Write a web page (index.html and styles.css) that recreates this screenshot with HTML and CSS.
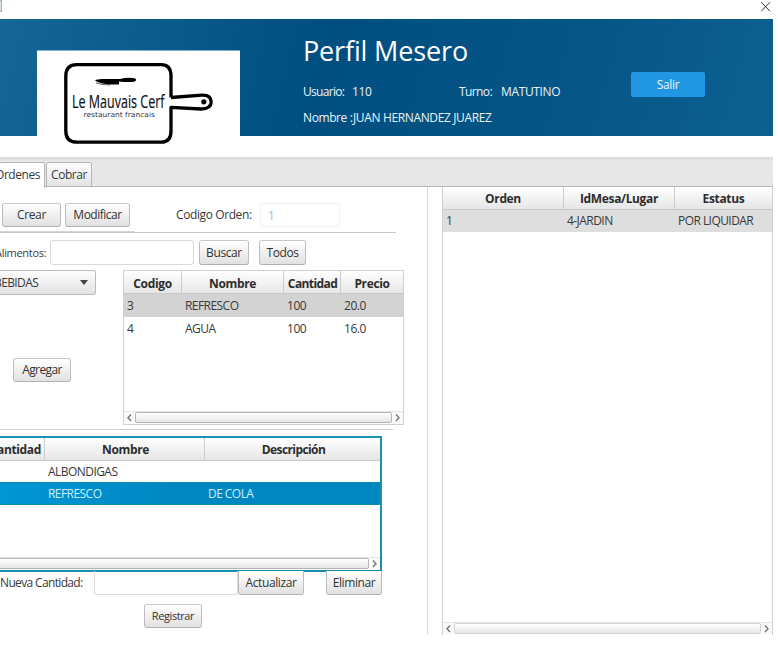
FILE: index.html
```html
<!DOCTYPE html>
<html lang="es">
<head>
<meta charset="utf-8">
<title>Perfil Mesero</title>
<link rel="stylesheet" href="styles.css">
</head>
<body>
<div class="window">
  <div class="titlebar">
    <span class="edge"></span>
    <svg class="close" width="12" height="12" viewBox="0 0 12 12"><path d="M1.2 1.2L10 10.2M10 1.2L1.2 10.2"/></svg>
  </div>
  <header class="header">
    <svg class="logo" width="203" height="106" viewBox="37 50 203 106">
      <rect x="37" y="50.5" width="203" height="106" fill="#fff"/>
      <path class="board" d="M171 97.5V76Q171 64.7 161 64.7H77Q65.8 64.7 65.8 76V131Q65.8 142.2 77 142.2H161Q171 142.2 171 131V107.3L201 109Q211 109 211.2 102Q211 95 202 95.2L171 97.5"/>
      <circle cx="203.8" cy="101.8" r="2.6"/>
      <path d="M95 80.5Q97 79 102 79H120Q128 77 135.500 78.500Q137 80 135 81.500Q128 82.500 119 81.500V84.500H110Q100 84 95 80.500Z"/>
      <path class="glint" d="M96 82.800Q101 85 110 85"/>
      <text class="brand" x="72" y="107.500" textLength="92.500" lengthAdjust="spacingAndGlyphs">Le Mauvais Cerf</text>
      <text class="tagline" x="83.500" y="117" textLength="71.500" lengthAdjust="spacingAndGlyphs">restaurant francais</text>
    </svg>
    <div class="profile">
      <h1>Perfil Mesero</h1>
      <div class="line user"><span class="key">Usuario:</span><span class="id">110</span><span class="shift">Turno:</span><span>MATUTINO</span></div>
      <div class="line name"><span class="key">Nombre :</span><span>JUAN HERNANDEZ JUAREZ</span></div>
    </div>
    <button class="exit">Salir</button>
  </header>
  <nav class="tabs"><div class="tab active"><span>Ordenes</span></div><div class="tab"><span>Cobrar</span></div></nav>
  <main class="content">
    <section class="left">
      <div class="row actions">
        <button class="btn crear">Crear</button><button class="btn modificar">Modificar</button>
        <label class="order-label">Codigo Orden:</label><div class="field disabled">1</div>
      </div>
      <div class="rule top"></div>
      <div class="row search">
        <label class="food-label">Alimentos:</label><div class="field food"></div>
        <button class="btn buscar">Buscar</button><button class="btn todos">Todos</button>
      </div>
      <div class="menu">
        <div class="picker">
          <div class="combo"><span>BEBIDAS</span><i></i></div>
          <button class="btn agregar">Agregar</button>
        </div>
        <div class="table products">
          <div class="tr th"><b>Codigo</b><b>Nombre</b><b>Cantidad</b><b>Precio</b></div>
          <div class="tr sel"><span>3</span><span class="caps">REFRESCO</span><span>100</span><span>20.0</span></div>
          <div class="tr"><span>4</span><span class="caps">AGUA</span><span>100</span><span>16.0</span></div>
          <div class="scroll"><svg width="11" height="13" viewBox="0 0 11 13"><path d="M7 3.500L4 6.700L7 10"/></svg><div class="thumb"></div><svg width="11" height="13" viewBox="0 0 11 13"><path d="M4 3.500L7 6.700L4 10"/></svg></div>
        </div>
      </div>
      <div class="rule bottom"></div>
      <div class="table detail">
        <div class="tr th"><b>Cantidad</b><b>Nombre</b><b>Descripción</b></div>
        <div class="tr"><span></span><span class="caps">ALBONDIGAS</span><span></span></div>
        <div class="tr chosen"><span></span><span class="caps">REFRESCO</span><span class="caps">DE COLA</span></div>
        <div class="scroll"><div class="thumb"></div><svg width="11" height="13" viewBox="0 0 11 13"><path d="M4 3.500L7 6.700L4 10"/></svg></div>
      </div>
      <div class="row update">
        <label class="qty-label">Nueva Cantidad:</label><div class="field qty"></div>
        <button class="btn actualizar">Actualizar</button><button class="btn eliminar">Eliminar</button>
      </div>
      <button class="btn registrar">Registrar</button>
    </section>
    <section class="table orders">
      <div class="tr th"><b>Orden</b><b>IdMesa/Lugar</b><b>Estatus</b></div>
      <div class="tr sel"><span>1</span><span class="caps">4-JARDIN</span><span class="caps">POR LIQUIDAR</span></div>
      <div class="scroll"><svg width="11" height="13" viewBox="0 0 11 13"><path d="M7 3.500L4 6.700L7 10"/></svg><div class="thumb"></div><svg width="11" height="13" viewBox="0 0 11 13"><path d="M4 3.500L7 6.700L4 10"/></svg></div>
    </section>
  </main>
</div>
</body>
</html>
```
FILE: styles.css
```css
* { box-sizing: border-box; }
body { margin: 0; background: #fff; overflow: hidden; }
.window { width: 773px; height: 648px; font: 12px/16px "Open Sans", "Noto Sans", sans-serif; letter-spacing: -0.3px; color: #393939; white-space: nowrap; overflow: hidden; }
.titlebar { height: 19px; display: flex; justify-content: space-between; }
.edge { width: 2px; height: 12px; border: 1px solid #a9b5b6; border-left: 0; background: #d5e2e2; }
.close { margin: 1px 1px 0 0; fill: none; stroke: #333; stroke-width: 1; }

.header { height: 138px; display: flex; align-items: flex-start; background: linear-gradient(105deg, #156796 0%, #075687 28%, #004f80 42%, #045485 68%, #0e6092 100%) 0 0 / 773px 117px no-repeat; color: #e8f4fa; }
.logo { margin: 31px 0 0 37px; flex: none; }
.board { fill: none; stroke: #000; stroke-width: 3.300; stroke-linejoin: round; }
.glint { fill: none; stroke: #000; stroke-width: 0.600; }
.brand { font: 19px "Open Sans", sans-serif; letter-spacing: 0; fill: #111; stroke: #111; stroke-width: 0.200; }
.tagline { font: 7px "DejaVu Sans", sans-serif; letter-spacing: 0; fill: #333; }
.profile { width: 328px; margin-left: 63px; padding-top: 12px; }
h1 { margin: 0; font-size: 27px; line-height: 40px; font-weight: 400; letter-spacing: -0.150px; color: #fff; }
.line { display: flex; }
.user { margin-top: 13px; }
.name { margin-top: 10px; }
.key { width: 49px; }
.user .key { letter-spacing: -0.700px; }
.name .key { width: 50px; letter-spacing: -0.400px; }
.name span:last-child { letter-spacing: -0.360px; }
.id { width: 107px; letter-spacing: -0.400px; }
.shift { width: 42px; letter-spacing: -0.600px; }
.user span:last-child { letter-spacing: -0.350px; }
.exit { width: 74px; height: 25px; margin-top: 53px; padding: 0; border: 0; border-radius: 2px; background: #2196e3; color: #e9f6ff; font: inherit; letter-spacing: inherit; }

.tabs { height: 30px; display: flex; align-items: flex-start; gap: 1px; padding-top: 5px; background: linear-gradient(#d9d9d9 0, #e8e8e8 4px, #e6e6e6 100%); border-bottom: 1px solid #b8b8b8; }
.tab { width: 46px; height: 25px; border: 1px solid #b5b5b5; border-radius: 2px 2px 0 0; line-height: 24px; background: linear-gradient(#fdfdfd, #e4e4e4); text-align: center; letter-spacing: -0.450px; }
.tab.active { width: 45px; height: 26px; border-width: 1px 1px 0 0; background: #fff; display: flex; justify-content: flex-end; padding-right: 4px; }

.content { height: 448px; display: flex; gap: 14px; }
.left { width: 428px; border-right: 1px solid #d9d9d9; overflow: hidden; }
.row { display: flex; align-items: center; }
.btn { flex: none; padding: 0; height: 24px; font: inherit; letter-spacing: -0.400px; color: #333; border: 1px solid; border-color: #c8c8c8 #bdbdbd #b2b2b2 #bdbdbd; border-radius: 3px; background: linear-gradient(#fff, #e1e1e1); }
.field { flex: none; height: 25px; border: 1px solid #dadada; border-radius: 3px; }
.actions { padding: 16px 0 0 2px; }
.crear { width: 59px; }
.modificar { width: 65px; margin-left: 4px; letter-spacing: -0.500px; }
.order-label { width: 84px; margin-left: 46px; letter-spacing: -0.400px; }
.disabled { width: 80px; height: 24px; padding-left: 7px; line-height: 23px; color: #b5b5b5; border-color: #f0f0f0; }
.rule { height: 1px; background: #cfcfcf; }
.rule.top { width: 396px; height: 2px; margin-top: 4px; background: linear-gradient(#d4d4d4, #d4d4d4) 0 0 / 135px 1px no-repeat, linear-gradient(#c8c8c8, #c8c8c8) 0 1px / 396px 1px no-repeat; }
.search { margin-top: 7px; height: 25px; }
.food-label { width: 55px; margin-left: -5px; font-size: 11px; }
.food { width: 144px; }
.buscar { width: 50px; margin-left: 5px; height: 25px; }
.todos { width: 47px; margin-left: 10px; height: 25px; }
.menu { display: flex; margin-top: 5px; height: 155px; }
.picker { width: 123px; }
.combo { width: 96px; height: 25px; display: flex; align-items: center; justify-content: space-between; border: 1px solid #bcbcbc; border-left: 0; border-radius: 0 3px 3px 0; background: linear-gradient(#fdfdfd, #e3e3e3); padding-right: 7px; }
.combo span { margin-left: -6px; letter-spacing: -0.600px; }
.combo i { border: 4px solid transparent; border-top: 5px solid #444; border-bottom: 0; }
.agregar { display: block; width: 58px; margin: 63px 0 0 13px; letter-spacing: -0.600px; }

.table { display: flex; flex-direction: column; border: 1px solid #d0d0d0; background: #fff; }
.tr { display: grid; height: 22.500px; line-height: 22px; flex: none; }
.tr > * { padding-left: 3px; overflow: hidden; }
.th { background: linear-gradient(#fff, #e6e6e6); border-bottom: 1px solid #c9c9c9; line-height: 24px; }
.th b { text-align: center; padding: 0; border-right: 1px solid #ccc; color: #2d2d2d; letter-spacing: -0.350px; }
.th b:last-child { border-right: 0; }
.sel { background: #d3d3d3; }
.caps { letter-spacing: -0.550px; }
.scroll { margin-top: auto; height: 13px; display: flex; background: #fafafa; border-top: 1px solid #e4e4e4; }
.scroll svg { flex: none; fill: none; stroke: #777; stroke-width: 1.400; margin-top: -1px; }
.thumb { flex: 1; height: 11px; border: 1px solid #b5b5b5; border-radius: 2px; background: linear-gradient(#fff, #e6e6e6); }
.products { width: 281px; }
.products .th { height: 23px; line-height: 25px; }
.products .tr:not(.th) { line-height: 23px; letter-spacing: -0.450px; }
.products .tr:last-of-type { line-height: 22px; }
.products .tr { grid-template-columns: 58px 102px 57px 1fr; }
.products .th b:nth-child(3) { padding-left: 1px; letter-spacing: -0.600px; }
.rule.bottom { width: 393px; margin-top: 4px; }
.detail { width: 384px; height: 136px; margin: 6px 0 0 -2px; border: solid #1a8fb0; border-width: 2px 2px 2px 0; }
.detail .tr { grid-template-columns: 47px 160px 1fr; }
.detail .th { line-height: 23px; }
.detail .th b:first-child { display: flex; justify-content: flex-end; padding-right: 3px; }
.detail .th b:nth-child(2), .detail .th b:last-child { padding-left: 2px; }
.detail .th b:last-child { letter-spacing: -0.600px; }
.chosen { background: linear-gradient(90deg, #0097d6, #0087c2 45%); color: #c9f0ff; border: solid #1489af; border-width: 1px 0; line-height: 22px; margin-top: -1px; }
.detail .thumb { border-left: 0; }
.update { height: 24px; margin-top: -1px; }
.qty-label { width: 94px; letter-spacing: -0.650px; }
.qty { width: 144px; height: 24px; border-top: 0; border-radius: 0 0 3px 3px; }
.update .btn { border-top: 0; border-radius: 0 0 3px 3px; }
.actualizar { width: 66px; }
.eliminar { width: 56px; margin-left: 22px; }
.registrar { display: block; width: 58px; margin: 9px 0 0 144px; font-size: 11px; }
.orders { width: 331px; border-width: 0 1px; }
.orders .tr { grid-template-columns: 121px 111px 1fr; }
.orders .sel { background: #dedede; }
.orders .thumb { border-color: #d5d5d5; }
```
